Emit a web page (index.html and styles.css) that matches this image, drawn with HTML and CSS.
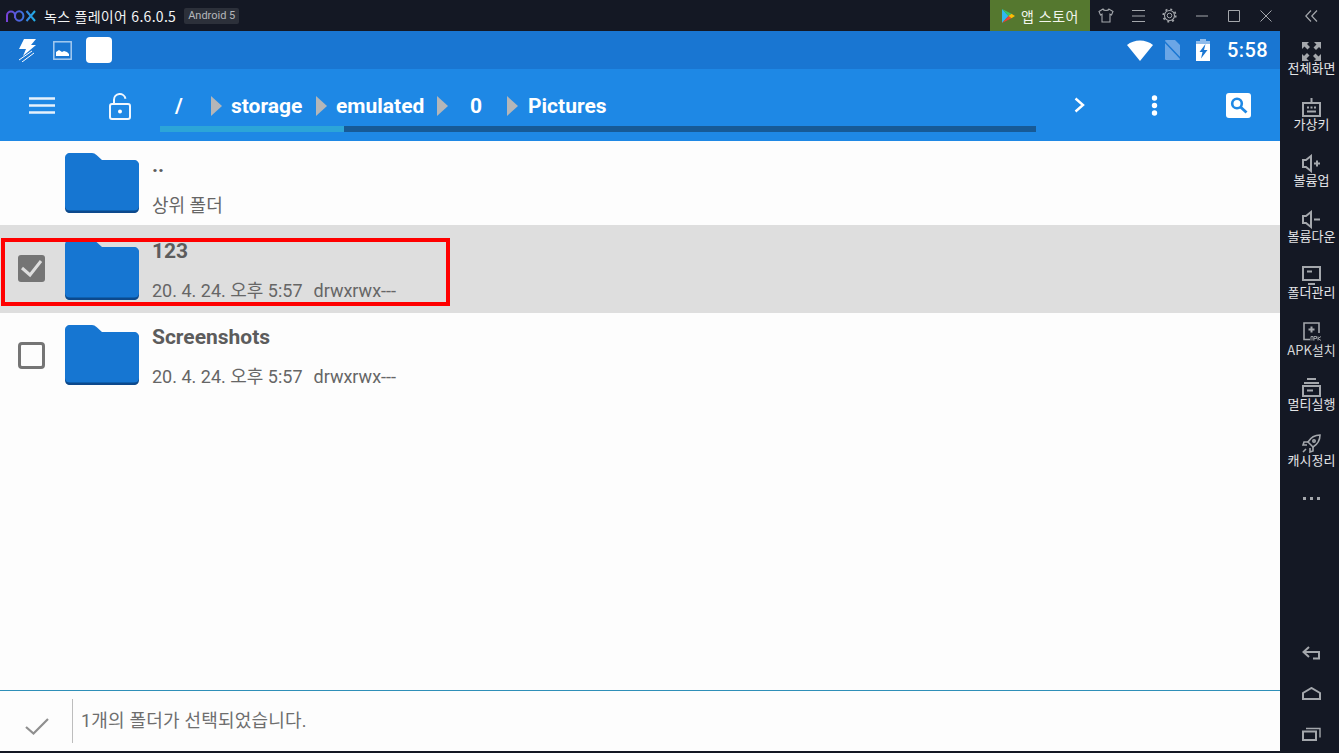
FILE: index.html
```html
<!DOCTYPE html>
<html lang="ko">
<head>
<meta charset="utf-8">
<title>Nox Player</title>
<link rel="stylesheet" href="styles.css">
</head>
<body>
<svg width="0" height="0" class="defs">
  <defs>
    <filter id="soft" x="-5%" y="-5%" width="110%" height="110%"><feGaussianBlur stdDeviation=".45"/></filter>
  </defs>
  <symbol id="folder" viewBox="0 0 74 60">
    <g filter="url(#soft)">
      <path d="M5 2h22c2 0 3 .7 4.500 2L37 8h32c3 0 5 2 5 5v42c0 3-2 5-5 5H5c-3 0-5-2-5-5V7c0-3 2-5 5-5z" fill="#0b4a8c"/>
      <path d="M5 0h22c2 0 3 .7 4.500 2L37 7h32c3 0 5 2 5 5v41c0 3-2 4.500-5 4.500H5c-3 0-5-1.500-5-4.500V5c0-3 2-5 5-5z" fill="#1976d2"/>
    </g>
  </symbol>
  <symbol id="crumb" viewBox="0 0 11 20">
    <path d="M0 0l11 10L0 20z" fill="#b4b6b8"/>
  </symbol>
</svg>

<header class="titlebar">
  <div class="brand">
    <svg class="logo" width="30" height="12" viewBox="0 0 30 12" fill="none" stroke-width="2">
      <defs><linearGradient id="logograd" gradientUnits="userSpaceOnUse" x1="0" x2="30" y1="0" y2="0"><stop offset="0" stop-color="#7a3fd6"/><stop offset=".55" stop-color="#3f6fe0"/><stop offset="1" stop-color="#1fb6e8"/></linearGradient></defs>
      <path d="M1 12V5.500a4 4 0 0 1 8 0V8M9 6a4.200 4.800 0 1 0 8.400 0a4.200 4.800 0 1 0-8.400 0M20.500 1l8.500 10M29 1l-8.500 10" stroke="url(#logograd)"/>
    </svg>
    <span class="app-name">녹스 플레이어 6.6.0.5</span>
    <span class="version-tag">Android 5</span>
  </div>
  <div class="win-controls">
    <div class="store">
      <svg width="13" height="14" viewBox="0 0 13 14"><path d="M0 0l6.500 7L0 14z" fill="#2fb8f0"/><path d="M0 0l9.500 4.800L6.500 7z" fill="#35c46b"/><path d="M0 14l9.500-4.800L6.500 7z" fill="#ea4335"/><path d="M9.500 4.800L13 7l-3.500 2.200L6.500 7z" fill="#fbbc05"/></svg>
      <span>앱 스토어</span>
    </div>
    <svg class="wc wc-shirt" width="16" height="15" viewBox="0 0 16 15" fill="none" stroke="#a4a7ac" stroke-width="1.100"><path d="M5 1L1 3.500l1.500 3.500L4 6.200V14h8V6.200l1.500.8L15 3.500 11 1c-.5 2-5.500 2-6 0z"/></svg>
    <svg class="wc wc-menu" width="13" height="12" viewBox="0 0 13 12" stroke="#a4a7ac"><path d="M0 .5h13M0 6h13M0 11.500h13"/></svg>
    <svg class="wc wc-gear" width="15" height="15" viewBox="0 0 15 15" fill="none" stroke="#a4a7ac"><circle cx="7.500" cy="7.500" r="2.300"/><circle cx="7.500" cy="7.500" r="5" stroke-width="1.100"/><circle cx="7.500" cy="7.500" r="6.300" stroke-width="1.600" stroke-dasharray="2 2.950"/></svg>
    <svg class="wc wc-min" width="12" height="2" viewBox="0 0 12 2" stroke="#a4a7ac"><path d="M0 1h12"/></svg>
    <svg class="wc wc-max" width="12" height="12" viewBox="0 0 12 12" fill="none" stroke="#a4a7ac"><path d="M.5.500h11v11H.5z"/></svg>
    <svg class="wc wc-close" width="12" height="12" viewBox="0 0 12 12" stroke="#a4a7ac"><path d="M.5.500l11 11M11.500.500l-11 11"/></svg>
    <svg class="wc wc-collapse" width="13" height="12" viewBox="0 0 13 12" fill="none" stroke="#a4a7ac" stroke-width="1.200"><path d="M6 .5L.8 6 6 11.500M12 .5L6.800 6l5.200 5.500"/></svg>
  </div>
</header>

<div class="shell">
  <main class="android">
    <div class="statusbar">
      <div class="status-left">
        <svg width="20" height="23" viewBox="0 0 20 23" fill="#fff"><path d="M7 0h12l-5 6h5L6 17l3-7H2z"/><path d="M2 21L15 12M5 23l12-9" stroke="#fff" fill="none"/></svg>
        <svg width="19" height="19" viewBox="0 0 19 19" fill="none"><rect x=".8" y=".8" width="17.400" height="17.400" stroke="#a5cbf0" stroke-width="1.500"/><path d="M3 15v-4l3-2 3 2 2-1 3 1 2 2v2z" fill="#fff"/></svg>
        <span class="white-tile"></span>
      </div>
      <div class="status-right">
        <svg width="26" height="21" viewBox="0 0 26 21"><path d="M0 5C7-1 19-1 26 5L13 21z" fill="#fff"/></svg>
        <svg class="nosim" width="19" height="20" viewBox="0 0 19 20"><path d="M3 0h9l5 5v14a1 1 0 0 1-1 1H3a1 1 0 0 1-1-1V1a1 1 0 0 1 1-1z" fill="#6ba6e6"/><path d="M0 0l19 20" stroke="#1976d2" stroke-width="1.500"/></svg>
        <svg class="battery" width="14" height="22" viewBox="0 0 14 22"><path d="M4 0h6v2h4v20H0V2h4z" fill="#fff"/><path d="M4 0h6v2h4v3H0V2h4z" fill="#8fbcec"/><path d="M9.500 5L3.500 13h3l-1.500 6.500L11.500 11H8z" fill="#1976d2"/></svg>
        <span class="clock">5:58</span>
      </div>
    </div>

    <div class="toolbar">
      <svg class="tb-menu" width="26" height="17" viewBox="0 0 26 17" stroke="#e6f1fc" stroke-width="2.400"><path d="M0 1.500h26M0 8.500h26M0 15.500h26"/></svg>
      <svg class="tb-lock" width="22" height="27" viewBox="0 0 22 27" fill="none" stroke="#f0f7fe" stroke-width="2"><rect x="1" y="11" width="20" height="15" rx="2"/><path d="M5 11V7a5.800 5.800 0 0 1 11.500-1.200"/><circle cx="11" cy="18.500" r="2" fill="#fff" stroke="none"/></svg>
      <div class="crumbs">
        <div class="crumb-row">
          <span class="c c-root">/</span>
          <svg class="arrow" width="11" height="20"><use href="#crumb"/></svg>
          <span class="c c-storage">storage</span>
          <svg class="arrow" width="11" height="20"><use href="#crumb"/></svg>
          <span class="c c-emu">emulated</span>
          <svg class="arrow" width="11" height="20"><use href="#crumb"/></svg>
          <span class="c c-zero">0</span>
          <svg class="arrow" width="11" height="20"><use href="#crumb"/></svg>
          <span class="c c-pics">Pictures</span>
        </div>
        <div class="progress"><div class="progress-fill"></div></div>
      </div>
      <svg class="tb-next" width="11" height="16" viewBox="0 0 11 16" fill="none" stroke="#fff" stroke-width="2.400"><path d="M1.500 1.500L9 8l-7.500 6.500"/></svg>
      <svg class="tb-dots" width="7" height="21" viewBox="0 0 7 21" fill="#fff"><circle cx="3.500" cy="3" r="2.700"/><circle cx="3.500" cy="10.500" r="2.700"/><circle cx="3.500" cy="18" r="2.700"/></svg>
      <svg class="tb-search" width="25" height="25" viewBox="0 0 25 25"><rect width="25" height="25" rx="3" fill="#fff"/><circle cx="11" cy="10.500" r="4.800" fill="none" stroke="#1e88e5" stroke-width="2.600"/><path d="M14.500 14l6 5.500" stroke="#1e88e5" stroke-width="2.800"/></svg>
    </div>

    <section class="list">
      <div class="row row-parent">
        <span class="check-slot"></span>
        <svg class="folder" width="74" height="60"><use href="#folder"/></svg>
        <div class="meta">
          <div class="name parent-name">..</div>
          <div class="sub">상위 폴더</div>
        </div>
      </div>
      <div class="row row-selected">
        <span class="check-slot">
          <svg width="28" height="28" viewBox="0 0 28 28"><rect x="0" y="0" width="27" height="27" rx="3" fill="#757575"/><path d="M4 13l8 7L23 6" fill="none" stroke="#dedede" stroke-width="3"/></svg>
        </span>
        <svg class="folder" width="74" height="60"><use href="#folder"/></svg>
        <div class="meta">
          <div class="name">123</div>
          <div class="sub">20. 4. 24. 오후 5:57<span class="perm">drwxrwx---</span></div>
        </div>
      </div>
      <div class="row row-plain">
        <span class="check-slot">
          <svg width="28" height="28" viewBox="0 0 28 28"><rect x="1.500" y="1.500" width="24" height="24" rx="2.500" fill="none" stroke="#757575" stroke-width="3"/></svg>
        </span>
        <svg class="folder" width="74" height="60"><use href="#folder"/></svg>
        <div class="meta">
          <div class="name">Screenshots</div>
          <div class="sub">20. 4. 24. 오후 5:57<span class="perm">drwxrwx---</span></div>
        </div>
      </div>
      <div class="highlight"></div>
    </section>

    <footer class="selection-bar">
      <span class="sel-icon">
        <svg width="24" height="17" viewBox="0 0 24 17" fill="none" stroke="#8f8f8f" stroke-width="2.200"><path d="M1 9l7.500 6.500L23 1"/></svg>
      </span>
      <span class="sel-text">1개의 폴더가 선택되었습니다.</span>
    </footer>
  </main>

  <aside class="side">
    <div class="tools">
      <div class="tool tool-full">
        <svg width="19" height="19" viewBox="0 0 19 19" fill="#a4a7ac"><path d="M0 0h7L5 2l3 3-2.500 2.500-3-3L0 7zM19 0v7l-2-2-3 3-2.500-2.500 3-3L12 0zM0 19v-7l2 2 3-3 2.500 2.500-3 3L7 19zM19 19h-7l2-2-3-3 2.500-2.500 3 3 2.500-2.500z"/></svg>
        <span>전체화면</span>
      </div>
      <div class="tool">
        <svg width="19" height="19" viewBox="0 0 19 19" fill="none" stroke="#a4a7ac" stroke-width="2"><rect x="1" y="5" width="17" height="13"/><path d="M9.500 0v5"/><path d="M5 9.500h9" stroke-dasharray="2 1.500"/><path d="M5 13.500h9"/></svg>
        <span>가상키</span>
      </div>
      <div class="tool">
        <svg width="19" height="19" viewBox="0 0 19 19" fill="none" stroke="#a4a7ac" stroke-width="2"><path d="M1 6v7h3l5 4V2L4 6zM12 9.500h6M15 6.500v6"/></svg>
        <span>볼륨업</span>
      </div>
      <div class="tool">
        <svg width="19" height="19" viewBox="0 0 19 19" fill="none" stroke="#a4a7ac" stroke-width="2"><path d="M1 6v7h3l5 4V2L4 6zM12 9.500h6"/></svg>
        <span>볼륨다운</span>
      </div>
      <div class="tool tool-low">
        <svg width="19" height="19" viewBox="0 0 19 19" fill="none" stroke="#a4a7ac" stroke-width="2"><rect x="1" y="1" width="17" height="13"/><path d="M6 18h7M5 5.500h5"/></svg>
        <span>폴더관리</span>
      </div>
      <div class="tool">
        <svg width="19" height="19" viewBox="0 0 19 19" fill="none" stroke="#a4a7ac"><path d="M8 17.500H2V1h15v10" stroke-width="1.600"/><path d="M9.500 4.500v6M6.500 7.500h6" stroke-width="2"/><path d="M9 18.500v-4h2v4M12 18.500v-4h2.500v2H12M16 14.500v4M19 14.500l-3 2 3 2" stroke-width=".9"/></svg>
        <span class="apk">APK설치</span>
      </div>
      <div class="tool">
        <svg width="19" height="19" viewBox="0 0 19 19" fill="none" stroke="#a4a7ac" stroke-width="2"><path d="M5 1h9M2 5h15"/><rect x="1" y="8" width="17" height="10"/><path d="M5 12.500h6"/></svg>
        <span>멀티실행</span>
      </div>
      <div class="tool">
        <svg width="19" height="19" viewBox="0 0 19 19" fill="none" stroke="#a4a7ac" stroke-width="1.600"><path d="M18 1c-5 0-9 2-12 7l5 5c5-3 7-7 7-12z"/><path d="M6 8H2l-1 3h4M11 13v4l-3 1v-4M4 15l-3 3"/><circle cx="12" cy="7" r="1.200"/></svg>
        <span>캐시정리</span>
      </div>
      <div class="tool-more"><i></i><i></i><i></i></div>
    </div>
    <div class="nav">
      <svg width="19" height="14" viewBox="0 0 19 14" fill="none" stroke="#a4a7ac" stroke-width="2"><path d="M7 1L1.500 6 7 11M2 6h15v6.500h-6"/></svg>
      <svg width="19" height="13" viewBox="0 0 19 13" fill="none" stroke="#a4a7ac" stroke-width="2"><path d="M1 12V6L9.500 1 18 6v6z"/></svg>
      <svg width="19" height="14" viewBox="0 0 19 14" fill="none" stroke="#a4a7ac" stroke-width="2"><path d="M1 4.500h13V13H1z"/><path d="M4 1.500h14v9" stroke-width="1.400"/></svg>
    </div>
  </aside>
</div>
</body>
</html>
```

FILE: styles.css
```css
* { box-sizing: border-box; }
html, body { margin: 0; padding: 0; height: 100%; overflow: hidden; }
body {
  width: 1339px;
  height: 753px;
  display: flex;
  flex-direction: column;
  background: #141824;
  font-family: "Noto Sans CJK KR", "Noto Sans", sans-serif;
}
.defs { position: absolute; }

.titlebar {
  height: 31px;
  flex: none;
  display: flex;
  justify-content: space-between;
  align-items: stretch;
  background: #141824;
}
.brand { display: flex; align-items: center; padding-left: 6px; }
.logo { margin-right: 8px; }
.app-name { color: #f2f3f4; font-size: 14px; letter-spacing: .28px; }
.version-tag {
  margin-left: 8px;
  padding: 0 4px;
  height: 16px;
  background: #2c303a;
  border-radius: 2px;
  color: #b5b7bb;
  font: 11px/16px Roboto, sans-serif;
}
.win-controls { display: flex; align-items: center; }
.store {
  width: 100px;
  height: 31px;
  display: flex;
  align-items: center;
  padding-left: 12px;
  gap: 6px;
  background: #55782f;
  color: #f2f5ee;
  font-size: 14px;
  letter-spacing: .5px;
  white-space: nowrap;
}
.wc { flex: none; }
.wc-shirt { margin-left: 8px; }
.wc-menu { margin-left: 18px; }
.wc-gear { margin-left: 17px; }
.wc-min { margin-left: 19px; }
.wc-max { margin-left: 20px; }
.wc-close { margin-left: 20px; }
.wc-collapse { margin-left: 33px; margin-right: 21px; }

.shell { flex: 1; display: flex; min-height: 0; }
.android { width: 1280px; height: 720px; flex: none; display: flex; flex-direction: column; background: #fdfdfd; }

.statusbar {
  height: 38px;
  flex: none;
  display: flex;
  justify-content: space-between;
  align-items: center;
  padding: 0 12px 0 17px;
  background: #1976d2;
}
.status-left { display: flex; align-items: center; gap: 16px; }
.white-tile { width: 26px; height: 26px; background: #fff; border-radius: 4px; margin-left: -2px; }
.status-right { display: flex; align-items: center; }
.nosim { margin-left: 10px; }
.battery { margin-left: 14px; }
.clock { margin-left: 17px; color: #fff; font: 500 20px/24px Roboto, sans-serif; letter-spacing: .4px; }

.toolbar {
  height: 72px;
  flex: none;
  display: flex;
  align-items: center;
  background: #1e88e5;
}
.tb-menu { margin-left: 29px; flex: none; }
.tb-lock { margin-left: 54px; flex: none; margin-top: 2px; }
.crumbs { width: 876px; margin-left: 29px; flex: none; display: flex; flex-direction: column; margin-top: 14px; }
.crumb-row { display: flex; align-items: center; height: 26px; color: #fff; font: 700 21px/26px Roboto, sans-serif; }
.c { display: block; white-space: nowrap; }
.arrow { flex: none; }
.c-root { margin-left: 15px; width: 36px; }
.c-storage { margin-left: 9px; width: 72px; }
.crumb-row .arrow:nth-of-type(2) { margin-left: 13px; }
.c-emu { margin-left: 9px; width: 88px; }
.crumb-row .arrow:nth-of-type(3) { margin-left: 13px; }
.c-zero { margin-left: 22px; width: 11px; }
.crumb-row .arrow:nth-of-type(4) { margin-left: 26px; }
.c-pics { margin-left: 10px; }
.progress { height: 6px; margin-top: 7px; background: #175a96; }
.progress-fill { width: 184px; height: 100%; background: #2ca5d8; }
.tb-next { margin-left: 38px; flex: none; }
.tb-dots { margin-left: 66px; flex: none; }
.tb-search { margin-left: 68px; flex: none; }

.list { flex: 1; min-height: 0; position: relative; }
.row { display: flex; align-items: flex-start; }
.row-parent { height: 84px; padding-top: 12px; }
.row-selected { height: 88px; padding-top: 15px; background: #dedede; }
.row-plain { height: 88px; padding-top: 12px; }
.check-slot { width: 65px; flex: none; padding: 15px 0 0 18px; display: block; }
.check-slot svg { display: block; }
.row-plain .check-slot { padding-top: 17px; }
.folder { flex: none; }
.meta { margin-left: 13px; }
.name { height: 24px; color: #5c5c5c; font: 700 21px/24px Roboto, "Noto Sans CJK KR", sans-serif; }
.row-selected .name { margin-top: -1px; }
.sub { margin-top: 16px; color: #666; font: 18px/24px Roboto, "Noto Sans CJK KR", sans-serif; white-space: nowrap; }
.row-parent .sub { margin-top: 17px; }
.perm { margin-left: 11px; }
.highlight {
  position: absolute;
  left: 1px;
  top: 97px;
  width: 449px;
  height: 68px;
  border: 4px solid #f00;
}

.selection-bar {
  height: 61px;
  flex: none;
  display: flex;
  align-items: center;
  border-top: 1px solid #2f8fb8;
  background: #fdfdfd;
}
.sel-icon { width: 73px; height: 44px; flex: none; display: flex; align-items: flex-end; padding-left: 25px; border-right: 1px solid #bdbdbd; }
.sel-icon svg { display: block; margin-bottom: 8px; }
.sel-text { margin-left: 8px; color: #6e6e6e; font: 18px/26px Roboto, "Noto Sans CJK KR", sans-serif; letter-spacing: .2px; }

.side { width: 59px; flex: none; display: flex; flex-direction: column; justify-content: space-between; background: #141824; }
.tools { display: flex; flex-direction: column; padding: 11px 0 0 4px; }
.tool { height: 56px; display: flex; flex-direction: column; align-items: center; color: #e4e5e7; font-size: 13px; line-height: 14px; }
.tool svg { flex: none; }
.tool span { white-space: nowrap; }
.tool .apk { color: #d5d6d8; margin-top: 2px; }
.tool-more { display: flex; justify-content: center; gap: 4px; padding-top: 7px; }
.tool-more i { width: 3px; height: 3px; background: #a4a7ac; }
.nav { display: flex; flex-direction: column; align-items: center; gap: 27px; padding: 0 0 12px 4px; }
```
